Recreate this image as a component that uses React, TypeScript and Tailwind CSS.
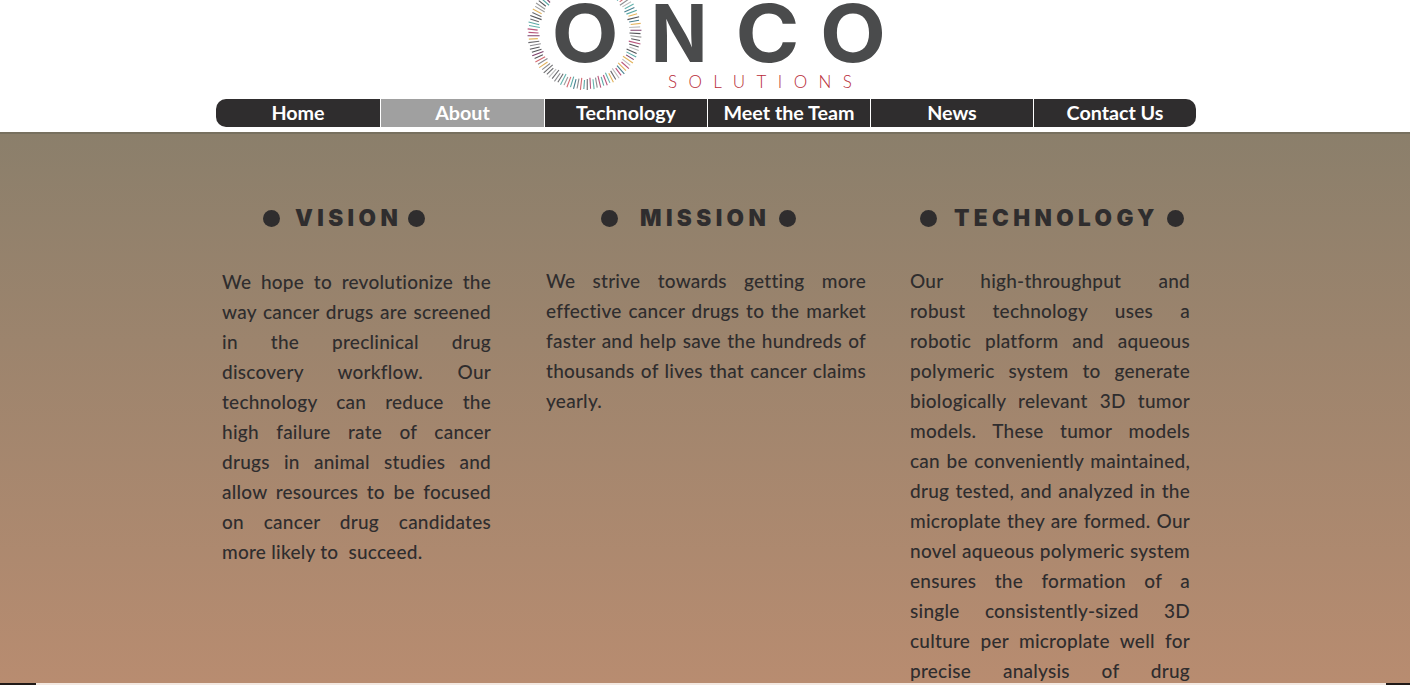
import React from 'react';

const NAV = [
  { label: 'Home', width: 'w-[164px]', extra: 'rounded-l-[10px]' },
  { label: 'About', width: 'w-[163px]', extra: 'bg-[#a0a0a0]' },
  { label: 'Technology', width: 'w-[162px]', extra: '' },
  { label: 'Meet the Team', width: 'w-[162px]', extra: '' },
  { label: 'News', width: 'w-[162px]', extra: '' },
  { label: 'Contact Us', width: 'w-[162px]', extra: 'rounded-r-[10px]' },
];

const VISION = [
  'We hope to revolutionize the',
  'way cancer drugs are screened',
  'in the preclinical drug',
  'discovery workflow. Our',
  'technology can reduce the',
  'high failure rate of cancer',
  'drugs in animal studies and',
  'allow resources to be focused',
  'on cancer drug candidates',
];

const MISSION = [
  'We strive towards getting more',
  'effective cancer drugs to the market',
  'faster and help save the hundreds of',
  'thousands of lives that cancer claims',
];

const TECH = [
  'Our high-throughput and',
  'robust technology uses a',
  'robotic platform and aqueous',
  'polymeric system to generate',
  'biologically relevant 3D tumor',
  'models. These tumor models',
  'can be conveniently maintained,',
  'drug tested, and analyzed in the',
  'microplate they are formed. Our',
  'novel aqueous polymeric system',
  'ensures the formation of a',
  'single consistently-sized 3D',
  'culture per microplate well for',
  'precise analysis of drug',
];

const RAY_COLORS = ['#55565a', '#b9557c', '#5aa9a6', '#9a9a9a', '#e3b35c', '#7d3f6b', '#6b6b6e', '#63b3ad', '#bdbdbd', '#d46a72', '#8b8b8f', '#47808f'];

function Logo() {
  const rays = Array.from({ length: 104 }, (_, i) => {
    const a = (i / 104) * Math.PI * 2;
    const inner = 45 + (i % 3);
    const outer = 56 + (i % 2);
    const pick = Math.floor(Math.abs(Math.sin(i * 12.9898) * 43758.5453)) % RAY_COLORS.length;
    return {
      x1: 57.5 + Math.cos(a) * inner,
      y1: 33 + Math.sin(a) * inner,
      x2: 57.5 + Math.cos(a + 0.012) * outer,
      y2: 33 + Math.sin(a + 0.012) * outer,
      color: RAY_COLORS[pick],
    };
  });

  return (
    <svg width="360" height="92" viewBox="0 0 360 92" className="block">
      {rays.map((r, i) => (
        <line key={i} x1={r.x1} y1={r.y1} x2={r.x2} y2={r.y2} stroke={r.color} strokeWidth="1.1" />
      ))}
      <g fill="#4a4b4c" fontFamily="'Inter', sans-serif" fontWeight="700" fontSize="80" textAnchor="middle">
        <text transform="translate(58 62) scale(1.09 1)">O</text>
        <text transform="translate(152 62) scale(0.93 1)">N</text>
        <text transform="translate(240.5 62) scale(1.08 1)">C</text>
        <text transform="translate(326 62) scale(1.07 1)">O</text>
      </g>
      <text x="141" y="88" fill="#b82c38" fontFamily="'Lato', sans-serif" fontWeight="300" fontSize="17" letterSpacing="11.4">
        SOLUTIONS
      </text>
    </svg>
  );
}

function Heading({ children, gapLeft, gapRight, className }: { children: string; gapLeft: string; gapRight: string; className: string }) {
  return (
    <div className={`flex h-[30px] items-center ${className}`}>
      <span className={`h-[17px] w-[17px] rounded-full bg-[#2f2d2e] ${gapLeft}`} />
      <span className="font-['Inter',sans-serif] text-[22.5px] leading-[30px] font-black tracking-[4.4px] text-[#2f2d2e]">{children}</span>
      <span className={`h-[17px] w-[17px] rounded-full bg-[#2f2d2e] ${gapRight}`} />
    </div>
  );
}

function Lines({ lines, last, tracking }: { lines: string[]; last?: string; tracking: string }) {
  return (
    <div className={`text-[19px] leading-[30px] font-medium text-[#2f2d2e] ${tracking}`}>
      {lines.map((line) => (
        <div key={line} className="text-justify [text-align-last:justify]">
          {line}
        </div>
      ))}
      {last && <div className="whitespace-pre">{last}</div>}
    </div>
  );
}

export default function App() {
  return (
    <div className="flex h-[685px] w-[1410px] flex-col overflow-hidden bg-white font-['Lato',sans-serif]">
      <header className="h-[132px] shrink-0">
        <div className="ml-[527px] h-[99px]">
          <Logo />
        </div>
        <nav className="ml-[216px] flex h-7 w-[980px] gap-px">
          {NAV.map((item) => (
            <div
              key={item.label}
              className={`flex items-center justify-center pb-px text-[19.7px] font-bold text-white ${item.width} ${item.extra} ${item.label === 'About' ? '' : 'bg-[#2f2d2e]'}`}
            >
              {item.label}
            </div>
          ))}
        </nav>
      </header>
      <main className="h-[551px] shrink-0 overflow-hidden border-t-2 border-[#77705f] bg-gradient-to-b from-[#8b7f6b] to-[#b88c70] pt-[69px]">
        <div className="ml-[222px] flex">
          <section className="w-[269px]">
            <Heading className="ml-[41px]" gapLeft="mr-[15px]" gapRight="ml-[6px]">VISION</Heading>
            <div className="mt-[34px]">
              <Lines lines={VISION} last="more likely to  succeed." tracking="tracking-[0.25px]" />
            </div>
          </section>
          <section className="ml-[55px] w-[320px]">
            <Heading className="ml-[55px]" gapLeft="mr-[22px]" gapRight="ml-[9px]">MISSION</Heading>
            <div className="mt-[33px]">
              <Lines lines={MISSION} last="yearly." tracking="tracking-[0.25px]" />
            </div>
          </section>
          <section className="ml-[44px] w-[280px]">
            <Heading className="ml-[10px]" gapLeft="mr-[17px]" gapRight="ml-[8px]">TECHNOLOGY</Heading>
            <div className="mt-[33px]">
              <Lines lines={TECH} tracking="tracking-[0.25px]" />
            </div>
          </section>
        </div>
      </main>
      <div className="flex h-[2px] shrink-0 justify-between bg-[#f3e9e2]">
        <span className="w-9 bg-[#201a18]" />
        <span className="w-6 bg-[#201a18]" />
      </div>
    </div>
  );
}
